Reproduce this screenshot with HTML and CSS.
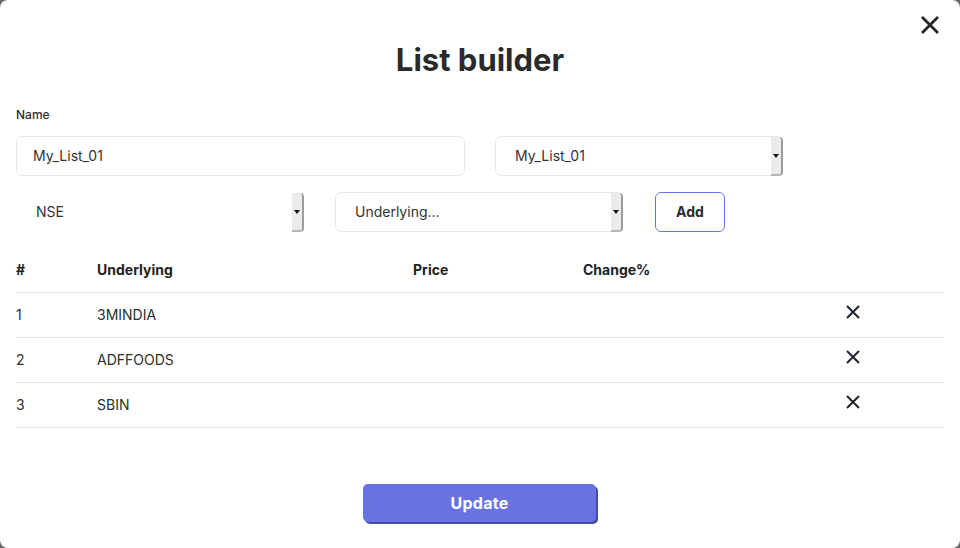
FILE: index.html
```html
<!DOCTYPE html>
<html>
<head>
<meta charset="utf-8">
<link rel="stylesheet" href="styles.css">
</head>
<body>
<div class="modal">
  <button class="close" aria-label="Close">
    <svg width="20" height="20" viewBox="0 0 20 20"><path d="M2 2L18 18M18 2L2 18" stroke="#262626" stroke-width="2.8" stroke-linecap="butt"/></svg>
  </button>
  <h1 class="title">List builder</h1>
  <div class="label">Name</div>
  <div class="row row1">
    <div class="field input">My_List_01</div>
    <div class="field select"><span class="val">My_List_01</span><span class="arrow"></span></div>
  </div>
  <div class="row row2">
    <div class="field select plain"><span class="val">NSE</span><span class="arrow"></span></div>
    <div class="field select"><span class="val">Underlying...</span><span class="arrow"></span></div>
    <button class="add">Add</button>
  </div>
  <div class="table">
    <div class="tr head">
      <div>#</div><div>Underlying</div><div>Price</div><div>Change%</div><div></div>
    </div>
    <div class="tr">
      <div>1</div><div>3MINDIA</div><div></div><div></div>
      <div class="del"><svg width="14" height="14" viewBox="0 0 14 14"><path d="M1 1L13 13M13 1L1 13" stroke="#1f2530" stroke-width="2"/></svg></div>
    </div>
    <div class="tr">
      <div>2</div><div>ADFFOODS</div><div></div><div></div>
      <div class="del"><svg width="14" height="14" viewBox="0 0 14 14"><path d="M1 1L13 13M13 1L1 13" stroke="#1f2530" stroke-width="2"/></svg></div>
    </div>
    <div class="tr">
      <div>3</div><div>SBIN</div><div></div><div></div>
      <div class="del"><svg width="14" height="14" viewBox="0 0 14 14"><path d="M1 1L13 13M13 1L1 13" stroke="#1f2530" stroke-width="2"/></svg></div>
    </div>
  </div>
  <div class="footer">
    <button class="update">Update</button>
  </div>
</div>
</body>
</html>
```
FILE: styles.css
```css
* { box-sizing: border-box; }
html, body { margin: 0; padding: 0; }
body {
  background: #6b6b6b;
  width: 960px;
  height: 548px;
  overflow: hidden;
  font-family: "Inter", "Open Sans", sans-serif;
  color: #2b2b2b;
}
.modal {
  position: relative;
  width: 960px;
  height: 548px;
  background: #fff;
  border-radius: 8px;
  padding: 0 16px;
  display: flex;
  flex-direction: column;
}
.close {
  position: absolute;
  top: 15px;
  right: 20px;
  width: 20px;
  height: 20px;
  padding: 0;
  border: 0;
  background: none;
  display: flex;
}
.title {
  margin: 40px 0 0;
  height: 40px;
  line-height: 40px;
  text-align: center;
  font-size: 31px;
  font-weight: 700;
  letter-spacing: 0;
  color: #2a2a2a;
}
.label {
  margin-top: 27px;
  font-size: 12px;
  font-weight: 500;
  line-height: 16px;
  color: #2d2d2d;
}
.row {
  display: flex;
  align-items: center;
}
.row1 { margin-top: 13px; gap: 30px; }
.row2 { margin-top: 16px; gap: 31px; }
.field {
  height: 40px;
  border: 1px solid #e3e7ee;
  border-radius: 6px;
  font-size: 14px;
  color: #333;
  display: flex;
  align-items: center;
}
.val { padding-bottom: 2px; }
.input { width: 449px; padding-left: 16px; padding-bottom: 2px; }
.select { width: 288px; padding-left: 19px; justify-content: space-between; }
.select.plain { border-color: transparent; }
.arrow {
  align-self: stretch;
  width: 12px;
  margin: 0 -1px -1px 0;
  background: #ebebeb;
  border-right: 2px solid #9c9c9c;
  border-bottom: 2px solid #b5b5b5;
  border-radius: 0 4px 4px 0;
  display: flex;
  align-items: center;
  justify-content: center;
}
.arrow::after {
  content: "";
  border-left: 3px solid transparent;
  border-right: 3px solid transparent;
  border-top: 4px solid #111;
}
.add {
  margin-left: 1px;
  width: 70px;
  height: 40px;
  background: #fff;
  border: 1px solid #6b72e0;
  border-radius: 6px;
  font-family: inherit;
  font-size: 14px;
  font-weight: 700;
  color: #2b2b2b;
  padding-bottom: 2px;
}
.table { margin-top: 16px; }
.tr {
  display: grid;
  grid-template-columns: 81px 316px 170px 263px 1fr;
  align-items: center;
  height: 45px;
  padding-bottom: 2px;
  border-bottom: 1px solid #e0e3e8;
  font-size: 14px;
  color: #2d2d2d;
}
.tr.head {
  font-weight: 700;
  color: #222;
}
.del { display: flex; margin-top: -4px; }
.footer {
  margin-top: 56px;
  display: flex;
  justify-content: center;
}
.update {
  width: 233px;
  height: 38px;
  margin-left: -1px;
  background: #6872e3;
  border: 0;
  border-radius: 5px;
  box-shadow: 2px 2px 0 #464ca0;
  color: #fff;
  font-family: inherit;
  font-size: 16px;
  font-weight: 700;
  letter-spacing: 0.3px;
}
```
